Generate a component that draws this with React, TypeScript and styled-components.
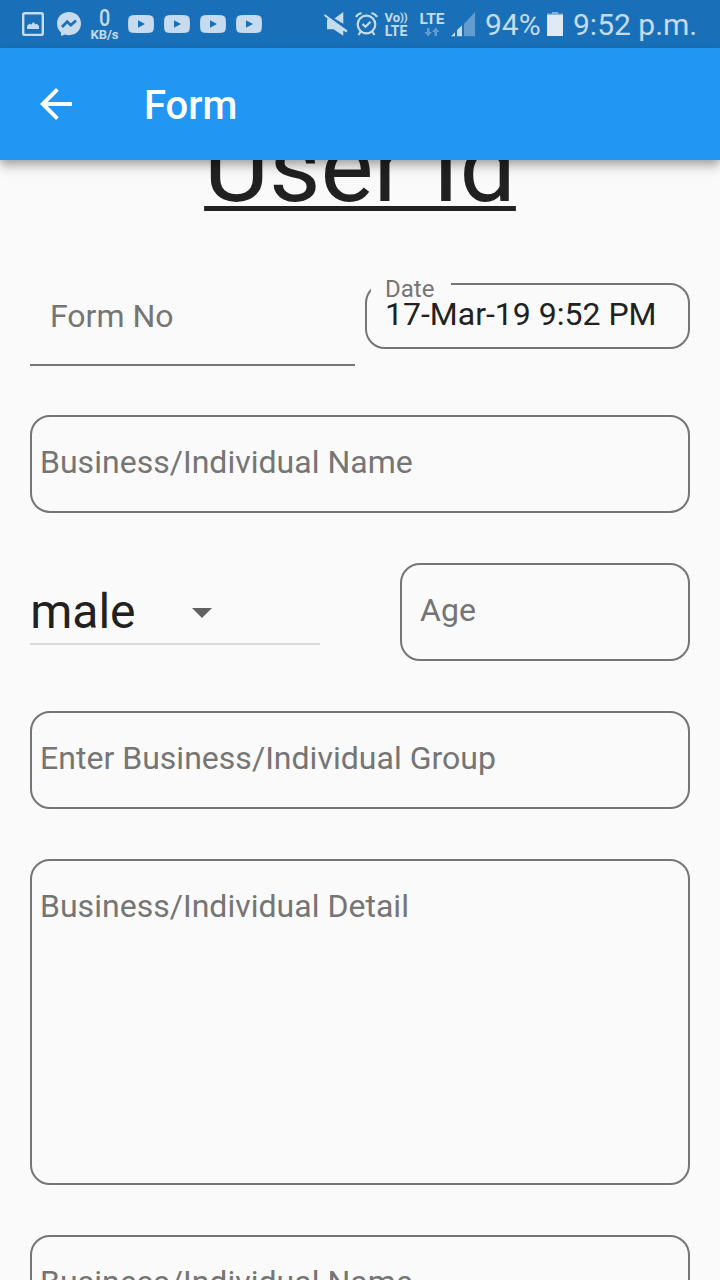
import React from "react";
import styled, { createGlobalStyle } from "styled-components";

const GlobalStyle = createGlobalStyle`
  * { box-sizing: border-box; }
  html, body { margin: 0; padding: 0; background: #fafafa; }
  body { font-family: Roboto, "Liberation Sans", sans-serif; color: #212121; overflow: hidden; }
`;

const Screen = styled.div`
  width: 720px;
  height: 1280px;
  display: flex;
  flex-direction: column;
  overflow: hidden;
  background: #fafafa;
`;

const StatusBar = styled.header`
  flex: none;
  height: 48px;
  display: flex;
  align-items: center;
  justify-content: space-between;
  padding: 0 24px 0 21px;
  background: #1a70b8;
  color: #c6dbed;
`;

const Notifications = styled.div`
  display: flex;
  align-items: center;
  height: 48px;
`;

const Indicators = styled(Notifications)``;

const Glyph = styled.svg<{ $gap?: number }>`
  flex: none;
  display: block;
  margin-left: ${(p) => p.$gap ?? 0}px;
`;

const Stack = styled.div<{ $gap: number; $width: number }>`
  display: flex;
  flex-direction: column;
  align-items: center;
  flex: none;
  width: ${(p) => p.$width}px;
  margin-left: ${(p) => p.$gap}px;
  padding-top: 1px;
  white-space: nowrap;
`;

const Tiny = styled.span<{ $size: number; $line: number; $weight?: number; $track?: number }>`
  font-size: ${(p) => p.$size}px;
  line-height: ${(p) => p.$line}px;
  font-weight: ${(p) => p.$weight ?? 700};
  letter-spacing: ${(p) => p.$track ?? 0}px;
`;

const Speed = styled(Tiny)`
  transform: scaleX(0.86);
`;

const Waves = styled.span`
  font-size: 11px;
  vertical-align: 1px;
`;

const StatusText = styled.span<{ $gap: number; $width: number }>`
  flex: none;
  width: ${(p) => p.$width}px;
  margin-left: ${(p) => p.$gap}px;
  padding-top: 2px;
  font-size: 30px;
  line-height: 48px;
  white-space: nowrap;
`;

const AppBar = styled.nav`
  position: relative;
  z-index: 1;
  flex: none;
  height: 112px;
  display: flex;
  align-items: center;
  padding-left: 32px;
  background: #2196f3;
  color: #fff;
  box-shadow: 0 4px 8px rgba(0, 0, 0, 0.24), 0 8px 12px rgba(0, 0, 0, 0.14);
`;

const AppTitle = styled.h1`
  margin: 4px 0 0 64px;
  font-size: 40px;
  line-height: 48px;
  font-weight: 500;
`;

const Content = styled.main`
  flex: 1;
  min-height: 0;
  overflow: hidden;
  padding: 0 30px;
`;

const Heading = styled.h2`
  margin: -52px 0 0;
  text-align: center;
  font-size: 100px;
  line-height: 117px;
  font-weight: 400;
  text-decoration: underline;
  text-decoration-thickness: 5px;
  text-underline-offset: 5px;
  text-decoration-skip-ink: none;
`;

const Fields = styled.form`
  display: flex;
  flex-direction: column;
  gap: 50px;
  margin-top: 42px;
`;

const Row = styled.div<{ $gap: number }>`
  display: flex;
  gap: ${(p) => p.$gap}px;
  height: 98px;
`;

const FormNo = styled.div`
  flex: 1;
  height: 99px;
  padding: 30px 20px 0;
  border-bottom: 2px solid #757575;
  font-size: 32px;
  line-height: 38px;
  color: #757575;
`;

const Outlined = styled.div<{ $height?: number; $inset?: number; $width?: number }>`
  flex: none;
  width: ${(p) => (p.$width ? `${p.$width}px` : "100%")};
  height: ${(p) => p.$height ?? 98}px;
  padding: 26px ${(p) => p.$inset ?? 8}px 0;
  border: 2px solid #757575;
  border-radius: 20px;
  font-size: 32px;
  line-height: 38px;
  letter-spacing: 0.02px;
  color: #757575;
`;

const DateField = styled.div`
  position: relative;
  width: 325px;
  height: 66px;
  margin-top: 16px;
  padding: 10px 18px;
  border: 2px solid #757575;
  border-radius: 20px;
  font-size: 32px;
  line-height: 38px;
  white-space: nowrap;
`;

const FloatingLabel = styled.span`
  position: absolute;
  left: 3.5px;
  top: -10px;
  width: 80px;
  height: 17px;
  padding-left: 14.5px;
  background: #fafafa;
  color: #757575;
  font-size: 24px;
  line-height: 28px;
`;

const Value = styled.span`
  position: relative;
`;

const Dropdown = styled.div`
  display: flex;
  align-items: center;
  width: 290px;
  height: 82px;
  border-bottom: 2px solid #d9d9d9;
  font-size: 48px;
  line-height: 56px;
`;

const Selected = styled.span`
  width: 162px;
  padding: 17px 0 0 0.2px;
`;

const Caret = styled(Glyph)`
  margin-top: 20px;
`;

const YouTube = ({ gap }: { gap: number }) => (
  <Glyph $gap={gap} width="26" height="18" viewBox="0 0 26 18">
    <path
      fill="currentColor"
      fillRule="evenodd"
      d="M4 .2Q13-.3 22 .2Q25 .5 25.6 3.3Q26.3 9 25.6 14.7Q25 17.5 22 17.8Q13 18.3 4 17.8Q1 17.5 .4 14.7Q-.3 9 .4 3.3Q1 .5 4 .2ZM10 5.3V12.7L17 9Z"
    />
  </Glyph>
);

export default function App() {
  return (
    <Screen>
      <GlobalStyle />
      <StatusBar>
        <Notifications>
          <Glyph width="24" height="24" viewBox="0 0 24 24">
            <rect x="2.2" y="1.2" width="19.6" height="21.8" rx="1.5" fill="none" stroke="currentColor" strokeWidth="2.4" />
            <path fill="currentColor" d="M6 17V14L8.5 11.5L10 12.7L12.5 10L14.5 12.5L16 11.8L18 14V17Z" />
          </Glyph>
          <Glyph $gap={11} width="26" height="26" viewBox="0 0 26 26">
            <path fill="currentColor" d="M13 1C6 1 1 6 1 12.6C1 16.4 2.6 19.5 5 21.6V25L9 23.6C10.3 24 11.6 24.2 13 24.2C20 24.2 25 19.2 25 12.6C25 6 20 1 13 1Z" />
            <path d="M6 16L11.2 10.8L14.8 14.2L20 9.5" fill="none" stroke="#1a70b8" strokeWidth="2.8" />
          </Glyph>
          <Stack $gap={8.5} $width={28}>
            <Speed $size={23} $line={20} $weight={500}>0</Speed>
            <Tiny $size={13} $line={11}>KB/s</Tiny>
          </Stack>
          <YouTube gap={9.5} />
          <YouTube gap={10} />
          <YouTube gap={10} />
          <YouTube gap={10} />
        </Notifications>
        <Indicators>
          <Glyph width="24" height="26" viewBox="0 0 24 26">
            <path fill="currentColor" d="M19.3 1V12.7L10.5 7.5ZM3 9.5L14.5 14.7L19.3 18V24.8L9.5 18.3H3ZM0 4.7L1 3.2L23.5 19.5L22.5 21.5L3 10.5L3.5 7.5Z" />
          </Glyph>
          <Glyph $gap={7} width="24" height="26" viewBox="0 0 24 26" fill="none" stroke="currentColor" strokeWidth="2.2">
            <circle cx="11.5" cy="13.5" r="8.8" />
            <path d="M1 6Q2.5 3 6.5 2M22 6Q20.5 3 16.5 2M5.8 20.5L3.5 24M17.2 20.5L19.5 24" />
            <path d="M7.5 13L10.5 15.7L15.5 10.8" />
          </Glyph>
          <Stack $gap={5} $width={24}>
            <Tiny $size={13} $line={14} $track={-0.1}>Vo<Waves>))</Waves></Tiny>
            <Tiny $size={14} $line={13}>LTE</Tiny>
          </Stack>
          <Stack $gap={11} $width={26}>
            <Tiny $size={15.5} $line={15}>LTE</Tiny>
            <Glyph width="16" height="10" viewBox="0 0 16 10" fill="#639dcf">
              <path d="M3 1H5.5V5H8L4.2 9.5L.5 5H3ZM10.5 9H13V5H15.5L11.8 .5L8 5H10.5Z" />
            </Glyph>
          </Stack>
          <Glyph $gap={6} width="25" height="25" viewBox="0 0 25 25">
            <path fill="#639dcf" d="M13 12L24 0V24.3H13Z" />
            <path fill="currentColor" d="M0 24.3L4 20.3V24.3ZM6 18.3L11 13.3V24.3H6Z" />
          </Glyph>
          <StatusText $gap={9} $width={56}>94%</StatusText>
          <Glyph $gap={6} width="16" height="24" viewBox="0 0 16 24">
            <path fill="#86b3da" d="M5 0H11V1.5H16V4H0V1.5H5Z" />
            <path fill="#dfeaf4" d="M0 3H16V24H0Z" />
          </Glyph>
          <StatusText $gap={10} $width={123}>9:52 p.m.</StatusText>
        </Indicators>
      </StatusBar>
      <AppBar>
        <Glyph width="48" height="48" viewBox="0 0 24 24" fill="currentColor">
          <path d="M20 11H7.83l5.59-5.59L12 4l-8 8 8 8 1.41-1.41L7.83 13H20v-2z" />
        </Glyph>
        <AppTitle>Form</AppTitle>
      </AppBar>
      <Content>
        <Heading>User Id</Heading>
        <Fields>
          <Row $gap={10}>
            <FormNo>Form No</FormNo>
            <DateField>
              <FloatingLabel>Date</FloatingLabel>
              <Value>17-Mar-19 9:52 PM</Value>
            </DateField>
          </Row>
          <Outlined>Business/Individual Name</Outlined>
          <Row $gap={80}>
            <Dropdown>
              <Selected>male</Selected>
              <Caret width="20" height="10" viewBox="0 0 20 10">
                <path fill="#616161" d="M0 0H20L10 10Z" />
              </Caret>
            </Dropdown>
            <Outlined $width={290} $inset={18}>Age</Outlined>
          </Row>
          <Outlined>Enter Business/Individual Group</Outlined>
          <Outlined $height={326}>Business/Individual Detail</Outlined>
          <Outlined>Business/Individual Name</Outlined>
        </Fields>
      </Content>
    </Screen>
  );
}
